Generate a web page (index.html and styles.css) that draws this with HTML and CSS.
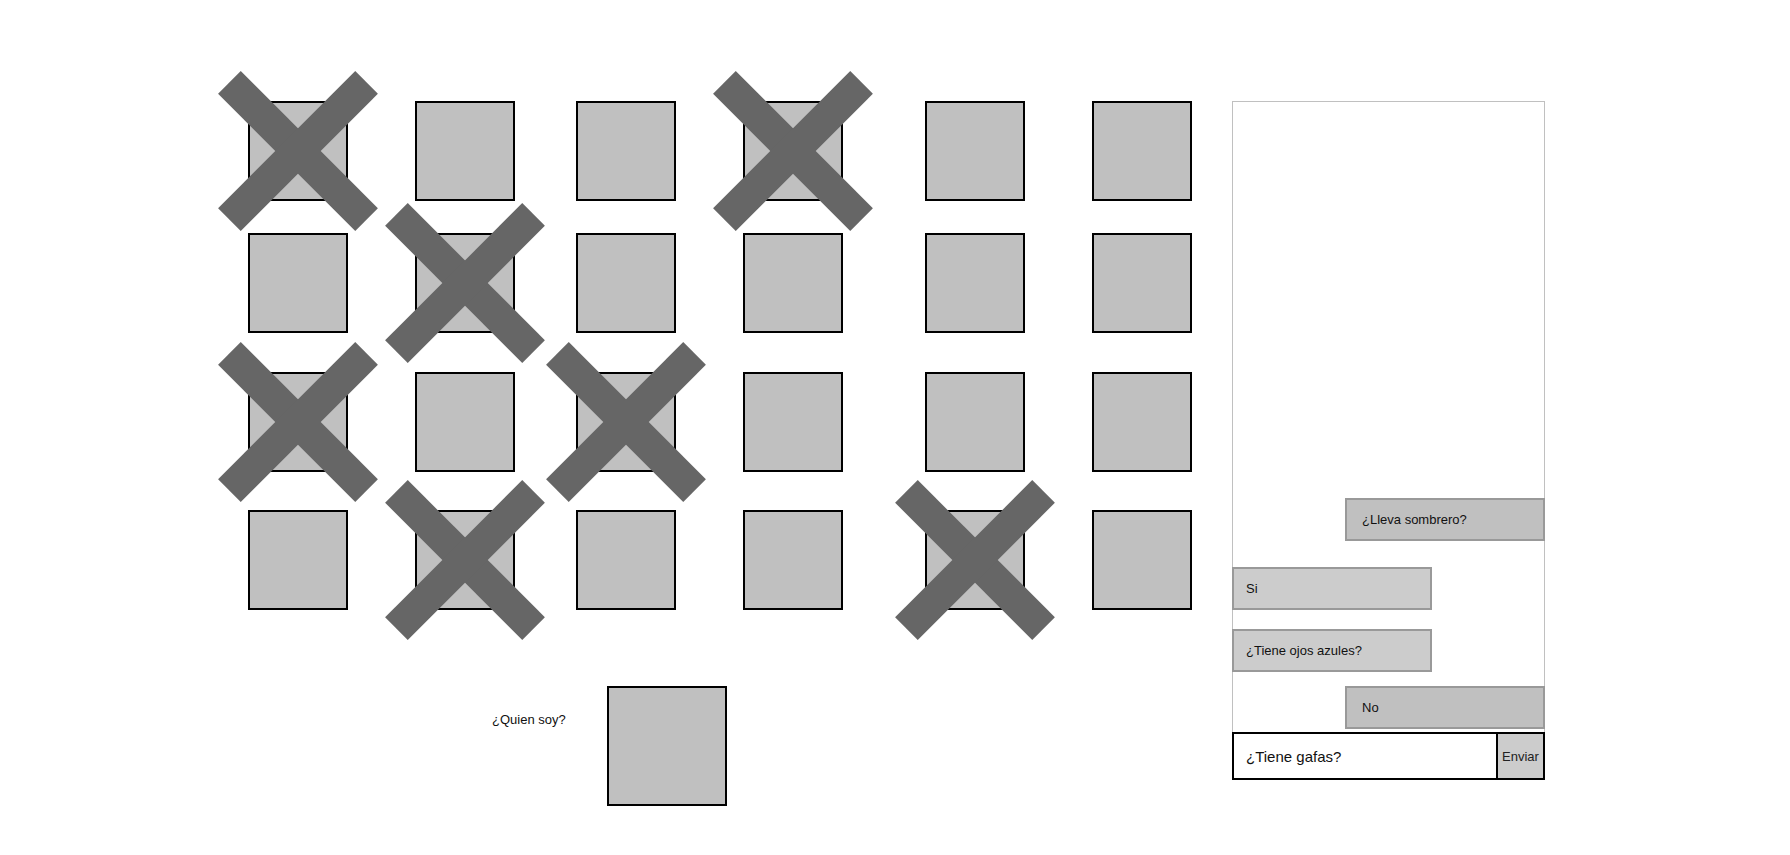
FILE: index.html
```html
<!DOCTYPE html>
<html lang="es">
<head>
	<meta charset="UTF-8">
	<title>¿Quien soy?</title>
	<link rel="stylesheet" href="styles.css">
</head>
<body>
	<div class="page">
		<div class="board">
			<div class="grid">
				<div class="cell out"></div>
				<div class="cell"></div>
				<div class="cell"></div>
				<div class="cell out"></div>
				<div class="cell"></div>
				<div class="cell"></div>

				<div class="cell"></div>
				<div class="cell out"></div>
				<div class="cell"></div>
				<div class="cell"></div>
				<div class="cell"></div>
				<div class="cell"></div>

				<div class="cell out"></div>
				<div class="cell"></div>
				<div class="cell out"></div>
				<div class="cell"></div>
				<div class="cell"></div>
				<div class="cell"></div>

				<div class="cell"></div>
				<div class="cell out"></div>
				<div class="cell"></div>
				<div class="cell"></div>
				<div class="cell out"></div>
				<div class="cell"></div>
			</div>
			<div class="who">
				<span class="who-label">¿Quien soy?</span>
				<div class="who-card"></div>
			</div>
		</div>
		<div class="chat">
			<div class="messages">
				<div class="msg msg-out">¿Lleva sombrero?</div>
				<div class="msg msg-in gap-l">Si</div>
				<div class="msg msg-in gap-m">¿Tiene ojos azules?</div>
				<div class="msg msg-out gap-s">No</div>
			</div>
			<form class="send" onsubmit="return false;">
				<input type="text" class="send-text" value="¿Tiene gafas?">
				<button class="send-btn">Enviar</button>
			</form>
		</div>
	</div>
</body>
</html>
```

FILE: styles.css
```css
*{margin:0;padding:0;box-sizing:border-box;}
body{
	font-family: "Liberation Sans", Arial, sans-serif;
	color: #111;
	background: #fff;
}
.page{
	display: flex;
	gap: 40px;
	margin: 101px 0 0 248px;
}
.board{
	width: 944px;
}
.grid{
	display: grid;
	grid-template-columns: 167px 161px 167px 182px 167px 100px;
	grid-template-rows: 132px 139px 138px 100px;
}
.cell{
	position: relative;
	width: 100px;
	height: 100px;
	border: 2px solid #000;
	background: #c0c0c0;
}
.cell.out::before,
.cell.out::after{
	content: "";
	position: absolute;
	left: 50%;
	top: 50%;
	width: 194px;
	height: 32px;
	background: #666;
	z-index: 1;
	transform: translate(-50%,-50%) rotate(45deg);
}
.cell.out::after{
	transform: translate(-50%,-50%) rotate(-45deg);
}
.who{
	display: flex;
	align-items: flex-start;
	margin-top: 76px;
	padding-left: 244px;
}
.who-label{
	font-size: 13px;
	line-height: 15px;
	margin-top: 26px;
}
.who-card{
	width: 120px;
	height: 120px;
	margin-left: 41px;
	border: 2px solid #000;
	background: #c0c0c0;
}
.chat{
	width: 313px;
	height: 679px;
	border: 1px solid #c0c0c0;
	display: flex;
	flex-direction: column;
}
.messages{
	flex: 1;
	display: flex;
	flex-direction: column;
	justify-content: flex-end;
	margin: 0 -1px;
	padding-bottom: 3px;
}
.msg{
	width: 200px;
	height: 43px;
	display: flex;
	align-items: center;
	border: 2px solid #999;
	font-size: 13px;
}
.msg-out{
	margin-left: auto;
	padding-left: 15px;
	background: #c0c0c0;
}
.msg-in{
	padding-left: 12px;
	background: #ccc;
}
.gap-l{ margin-top: 26px; }
.gap-m{ margin-top: 19px; }
.gap-s{ margin-top: 14px; }
.send{
	display: flex;
	height: 48px;
	margin: 0 -1px -1px;
	border: 2px solid #000;
	background: #fff;
}
.send-text{
	flex: 1;
	min-width: 0;
	border: none;
	outline: none;
	padding: 0 12px;
	font-family: inherit;
	font-size: 15px;
	color: #111;
	background: transparent;
}
.send-btn{
	width: 47px;
	border: none;
	border-left: 2px solid #000;
	background: #ccc;
	font-family: inherit;
	font-size: 13px;
	color: #222;
}
```
